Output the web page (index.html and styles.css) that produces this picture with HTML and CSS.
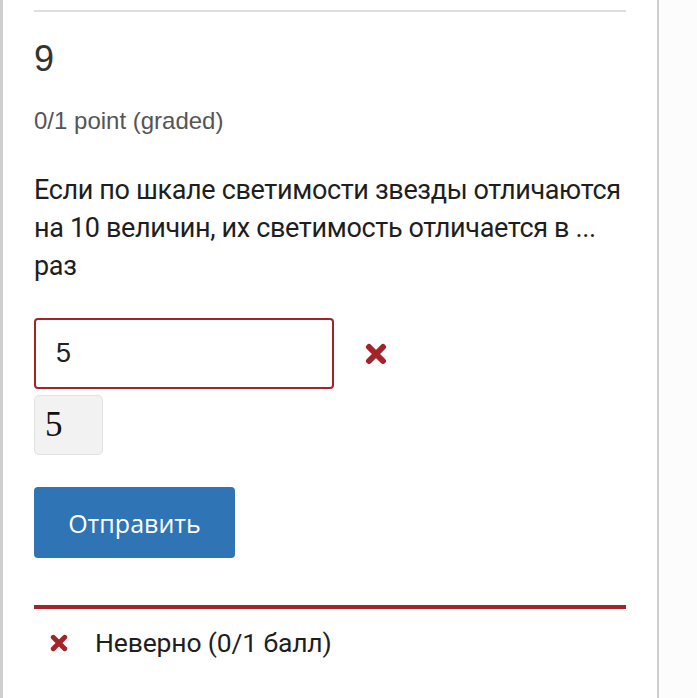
FILE: index.html
```html
<!DOCTYPE html>
<html lang="ru">
<head>
<meta charset="utf-8">
<link rel="stylesheet" href="styles.css">
</head>
<body>
<div class="page">
  <div class="panel">
    <hr class="top-rule">
    <h3 class="problem-num">9</h3>
    <div class="points">0/1 point (graded)</div>
    <p class="question">Если по шкале светимости звезды отличаются на 10 величин, их светимость отличается в ... раз</p>
    <div class="answer-row">
      <div class="answer-input">5</div>
      <svg class="mark" viewBox="0 0 22 22" width="22" height="22"><path d="M4 4L18 18M18 4L4 18" stroke="#a4232b" stroke-width="6" stroke-linecap="round"/></svg>
    </div>
    <div class="preview">5</div>
    <div class="btn-wrap"><button class="submit">Отправить</button></div>
    <div class="feedback">
      <svg class="mark small" viewBox="0 0 22 22" width="18" height="18"><path d="M4 4L18 18M18 4L4 18" stroke="#a4232b" stroke-width="6" stroke-linecap="round"/></svg>
      <span class="fb-text">Неверно (0/1 балл)</span>
    </div>
  </div>
</div>
</body>
</html>
```
FILE: styles.css
```css
html, body {
  margin: 0;
  padding: 0;
  background: #fff;
}
.page {
  width: 697px;
  height: 698px;
  overflow: hidden;
  background: #fcfcfc;
}
.panel {
  width: 592px;
  height: 698px;
  box-sizing: content-box;
  background: #fff;
  border-left: 3px solid #cfcfcf;
  border-right: 2px solid #cfcfcf;
  padding: 0 31px;
  font-family: "Liberation Sans", Arial, sans-serif;
  color: #222;
}
.top-rule {
  margin: 0;
  padding-top: 10px;
  border: 0;
  border-bottom: 2px solid #dedede;
  height: 0;
}
.problem-num {
  margin: 27px 0 0 0;
  font-weight: normal;
  font-size: 36px;
  line-height: 40px;
  color: #333;
}
.points {
  margin-top: 29px;
  font-size: 24px;
  line-height: 26px;
  color: #555;
}
.question {
  margin: 37px 0 0 0;
  font-family: Roboto, "Liberation Sans", sans-serif;
  font-size: 27px;
  letter-spacing: -0.35px;
  line-height: 38px;
  color: #1e1e1e;
}
.answer-row {
  margin-top: 33px;
  display: flex;
  align-items: center;
  gap: 31px;
}
.answer-input {
  width: 276px;
  height: 67px;
  border: 2px solid #a4232b;
  border-radius: 4px;
  padding-left: 20px;
  font-size: 27px;
  line-height: 67px;
  color: #222;
}
.preview {
  margin-top: 6px;
  width: 67px;
  height: 58px;
  background: #f2f2f2;
  border: 1px solid #e2e2e2;
  border-radius: 5px;
  font-family: "Liberation Serif", "Times New Roman", serif;
  font-size: 35px;
  line-height: 58px;
  text-indent: 10px;
  color: #111;
}
.btn-wrap {
  margin-top: 32px;
}
.submit {
  width: 201px;
  height: 71px;
  background: #2f74b5;
  border: 0;
  border-radius: 4px;
  color: #fff;
  font-family: "Open Sans", sans-serif;
  font-size: 25px;
  padding: 0;
}
.feedback {
  margin-top: 47px;
  border-top: 4px solid #a4232b;
  display: flex;
  align-items: center;
  padding-top: 16px;
  padding-left: 16px;
  gap: 27px;
}
.fb-text {
  font-family: Roboto, "Liberation Sans", sans-serif;
  font-size: 26.5px;
  letter-spacing: -0.15px;
  line-height: 36px;
  color: #1e1e1e;
}
```
